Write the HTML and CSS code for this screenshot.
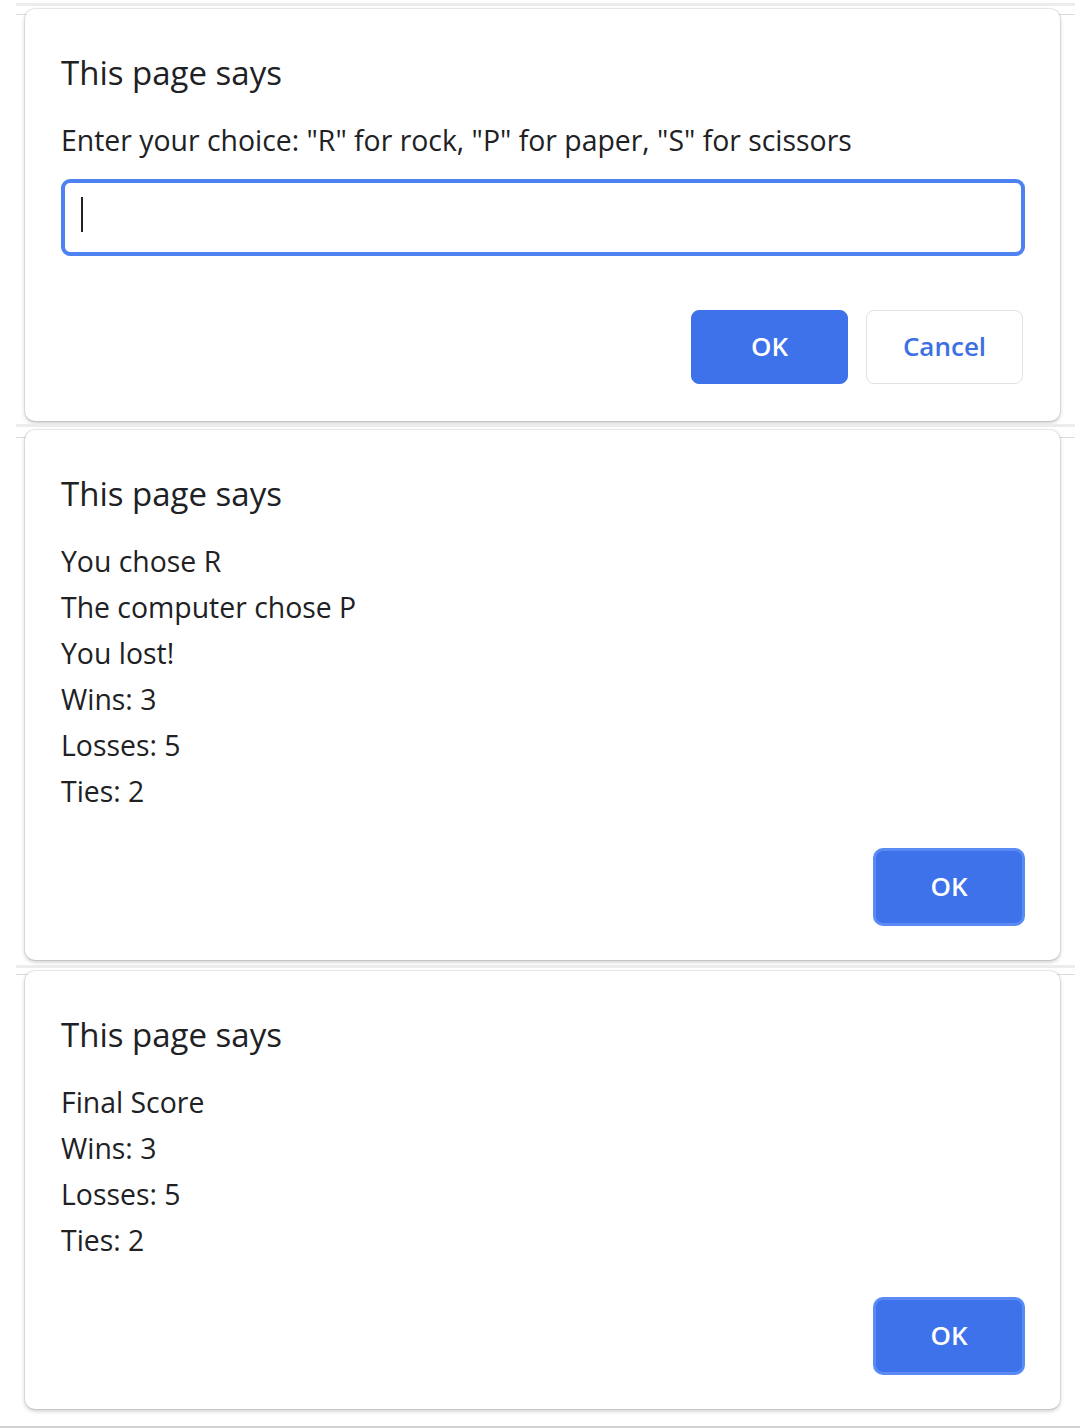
FILE: index.html
```html
<!DOCTYPE html>
<html lang="en">
<head>
<meta charset="utf-8">
<title>This page says</title>
<link rel="stylesheet" href="styles.css">
</head>
<body>
<div class="shot shot-1">
  <div class="strip"></div>
  <div class="dialog">
    <h2 class="title">This page says</h2>
    <div class="message">
      <p>Enter your choice: "R" for rock, "P" for paper, "S" for scissors</p>
    </div>
    <div class="field"><span class="caret"></span></div>
    <div class="actions actions-prompt">
      <button class="btn btn-primary">OK</button>
      <button class="btn btn-secondary">Cancel</button>
    </div>
  </div>
</div>
<div class="shot shot-2">
  <div class="strip"></div>
  <div class="dialog">
    <h2 class="title">This page says</h2>
    <div class="message">
      <p>You chose R</p>
      <p>The computer chose P</p>
      <p>You lost!</p>
      <p>Wins: 3</p>
      <p>Losses: 5</p>
      <p>Ties: 2</p>
    </div>
    <div class="actions">
      <button class="btn btn-primary btn-focused">OK</button>
    </div>
  </div>
</div>
<div class="shot shot-3">
  <div class="strip"></div>
  <div class="dialog">
    <h2 class="title">This page says</h2>
    <div class="message">
      <p>Final Score</p>
      <p>Wins: 3</p>
      <p>Losses: 5</p>
      <p>Ties: 2</p>
    </div>
    <div class="actions">
      <button class="btn btn-primary btn-focused">OK</button>
    </div>
  </div>
</div>
<div class="bottom-line"></div>
</body>
</html>
```

FILE: styles.css
```css
* { box-sizing: border-box; }

html, body {
  margin: 0;
  padding: 0;
  background: #ffffff;
}

body {
  font-family: "Open Sans", "Noto Sans", sans-serif;
  color: #202124;
  width: 1080px;
  height: 1428px;
  overflow: hidden;
}

.shot {
  margin: 0 5px 0 16px;
  background: linear-gradient(#dcdcdc, #dcdcdc) no-repeat 0 14px / 100% 1px;
}

.shot-1 { padding-top: 3px; }
.shot-2 { padding-top: 3px; background-position: 0 16px; }
.shot-3 { padding-top: 5px; background-position: 0 14px; }

.strip {
  height: 3px;
  background: #ececec;
}

.dialog {
  margin: 3px 15px 0 9px;
  background: #ffffff;
  border-radius: 10px;
  box-shadow: 0 0 0 1px rgba(0, 0, 0, 0.07), 0 2px 4px rgba(0, 0, 0, 0.22);
  padding: 42px 35px 34px 36px;
}

.shot-1 .dialog { padding-bottom: 37px; }

.title {
  margin: 0 0 22px 0;
  font-size: 33px;
  font-weight: 400;
  line-height: 44px;
  color: #202124;
}

.message p {
  margin: 0;
  font-size: 28.4px;
  line-height: 46px;
  color: #202124;
}

.field {
  margin-top: 16px;
  height: 77px;
  border: 4px solid #4f82f1;
  border-radius: 9px;
  padding: 14px 0 0 16px;
}

.caret {
  display: block;
  width: 2px;
  height: 35px;
  background: #202124;
}

.actions {
  display: flex;
  justify-content: flex-end;
  gap: 18px;
  margin-top: 34px;
}

.actions-prompt {
  margin-top: 54px;
  padding-right: 2px;
}

.btn {
  font-family: "Open Sans", "Noto Sans", sans-serif;
  font-size: 26px;
  font-weight: 600;
  line-height: 1;
  width: 157px;
  height: 74px;
  border-radius: 8px;
  padding: 0 0 3px 0;
  cursor: pointer;
}

.btn-primary {
  background: #3e72eb;
  color: #ffffff;
  border: 1px solid #3e72eb;
}

.btn-secondary {
  background: #ffffff;
  color: #3e6fe3;
  border: 1px solid #e0e1e5;
}

.btn-focused {
  width: 152px;
  height: 78px;
  border: 3px solid #5a8bf4;
  border-radius: 10px;
}

.bottom-line {
  position: absolute;
  left: 0;
  right: 0;
  top: 1426px;
  height: 2px;
  background: #d0d0d0;
}
```
